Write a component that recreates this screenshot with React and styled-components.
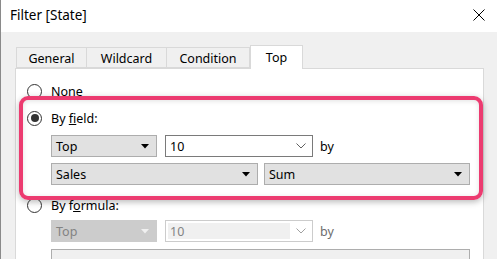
import React from "react";
import styled, { createGlobalStyle } from "styled-components";

const GlobalStyle = createGlobalStyle`
  html, body {
    margin: 0;
    padding: 0;
    background: #f0f0f0;
  }
  body {
    font-family: "Noto Sans", "Open Sans", sans-serif;
    font-size: 12px;
    color: #000;
  }
`;

const tabs = [
  { name: "General", width: "71px" },
  { name: "Wildcard", width: "80px" },
  { name: "Condition", width: "83px" },
  { name: "Top", width: "53px" },
];

const Arrow = () => (
  <svg width="8" height="5" viewBox="0 0 8 5">
    <path d="M0 0 L8 0 L4 4.5 Z" fill="currentColor" />
  </svg>
);

const Chevron = () => (
  <svg width="10" height="6" viewBox="0 0 10 6">
    <path d="M0.5 0.5 L5 5 L9.5 0.5" fill="none" stroke="currentColor" strokeWidth="1" />
  </svg>
);

const CloseIcon = () => (
  <svg width="12" height="12" viewBox="0 0 12 12">
    <path d="M0.5 0.5 L11.5 11.5 M11.5 0.5 L0.5 11.5" stroke="#000" strokeWidth="1" />
  </svg>
);

const Select = ({ value, width, disabled }) => (
  <SelectBox width={width} disabled={disabled}>
    <span>{value}</span>
    <Arrow />
  </SelectBox>
);

const Combo = ({ value, width, disabled }) => (
  <ComboBox width={width} disabled={disabled}>
    <ComboField disabled={disabled}>{value}</ComboField>
    <Chevron />
  </ComboBox>
);

const Radio = ({ checked, children }) => (
  <RadioRow>
    <RadioCircle>{checked && <RadioDot />}</RadioCircle>
    <span>{children}</span>
  </RadioRow>
);

export default function App() {
  return (
    <>
      <GlobalStyle />
      <Window>
        <TitleBar>
          <Title>Filter [State]</Title>
          <CloseButton>
            <CloseIcon />
          </CloseButton>
        </TitleBar>
        <Body>
          <TabRow>
            {tabs.map((t) => (
              <Tab key={t.name} width={t.width} active={t.name === "Top"}>
                {t.name}
              </Tab>
            ))}
          </TabRow>
          <Panel>
            <Radio>None</Radio>
            <Section gap="11px">
              <Radio checked>
                By <u>f</u>ield:
              </Radio>
            </Section>
            <Section gap="9px">
              <Row>
                <Select value="Top" width="106px" />
                <Combo value="10" width="148px" />
                <By>by</By>
              </Row>
            </Section>
            <Section gap="6px">
              <Row narrow>
                <Select value="Sales" width="207px" />
                <Select value="Sum" width="206px" />
              </Row>
            </Section>
            <Section gap="12px">
              <Radio>
                By f<u>o</u>rmula:
              </Radio>
            </Section>
            <Section gap="7px">
              <Row>
                <Select value="Top" width="106px" disabled />
                <Combo value="10" width="148px" disabled />
                <By disabled>by</By>
              </Row>
            </Section>
            <Section gap="7px">
              <Row>
                <FormulaBox />
              </Row>
            </Section>
            <Highlight />
          </Panel>
        </Body>
      </Window>
    </>
  );
}

const Window = styled.div`
  width: 497px;
  height: 259px;
  overflow: hidden;
  border-left: 1px solid #8a8a8a;
  box-sizing: border-box;
  display: flex;
  flex-direction: column;
  background: #f0f0f0;
`;

const TitleBar = styled.div`
  height: 32px;
  flex-shrink: 0;
  background: #fff;
  display: flex;
  align-items: center;
  justify-content: space-between;
  padding: 0 12px 2px 9px;
  box-sizing: border-box;
`;

const Title = styled.div`
  font-size: 13.5px;
`;

const CloseButton = styled.div`
  display: flex;
  align-items: center;
`;

const Body = styled.div`
  flex: 1;
  padding: 13px 13px 0 14px;
  display: flex;
  flex-direction: column;
`;

const TabRow = styled.div`
  display: flex;
  align-items: flex-end;
  height: 23px;
  padding-left: 1px;
  position: relative;
  z-index: 1;
`;

const Tab = styled.div`
  width: ${({ width }) => width};
  height: ${({ active }) => (active ? "24px" : "21px")};
  margin-bottom: ${({ active }) => (active ? "-1px" : "0")};
  padding-top: ${({ active }) => (active ? "0" : "1px")};
  display: flex;
  align-items: center;
  justify-content: center;
  box-sizing: border-box;
  font-size: 12.5px;
  border: 1px solid #d9d9d9;
  border-left-width: ${({ active }) => (active ? "1px" : "0")};
  border-bottom: ${({ active }) => (active ? "none" : "1px solid #d9d9d9")};
  background: ${({ active }) => (active ? "#fff" : "#f0f0f0")};
  &:first-child {
    border-left-width: 1px;
  }
`;

const Panel = styled.div`
  position: relative;
  flex: 1;
  background: #fff;
  border: 1px solid #d9d9d9;
  border-bottom: none;
  padding: 14px 0 0 11px;
  display: flex;
  flex-direction: column;
`;

const Section = styled.div`
  margin-top: ${({ gap }) => gap};
`;

const RadioRow = styled.div`
  display: flex;
  align-items: center;
  gap: 9px;
  height: 16px;
  font-size: 12.5px;
`;

const RadioCircle = styled.div`
  width: 15px;
  height: 15px;
  border-radius: 50%;
  border: 1px solid #333;
  box-sizing: border-box;
  display: flex;
  align-items: center;
  justify-content: center;
  background: #fff;
`;

const RadioDot = styled.div`
  width: 8px;
  height: 8px;
  border-radius: 50%;
  background: #333;
`;

const Row = styled.div`
  display: flex;
  align-items: center;
  gap: ${({ narrow }) => (narrow ? "6px" : "8px")};
  padding-left: 24px;
  font-size: 12.5px;
`;

const SelectBox = styled.div`
  width: ${({ width }) => width};
  height: 22px;
  box-sizing: border-box;
  border: 1px solid ${({ disabled }) => (disabled ? "#cccccc" : "#adadad")};
  background: ${({ disabled }) => (disabled ? "#cccccc" : "#e1e1e1")};
  color: ${({ disabled }) => (disabled ? "#838383" : "#000")};
  display: flex;
  align-items: center;
  justify-content: space-between;
  padding: 0 7px 0 4px;
  svg {
    color: ${({ disabled }) => (disabled ? "#f0f0f0" : "#000")};
  }
`;

const ComboBox = styled.div`
  width: ${({ width }) => width};
  height: 22px;
  box-sizing: border-box;
  border: 1px solid ${({ disabled }) => (disabled ? "#cccccc" : "#7a7a7a")};
  background: #fff;
  display: flex;
  align-items: center;
  padding: 2px 6px 2px 2px;
  gap: 6px;
  svg {
    color: ${({ disabled }) => (disabled ? "#a0a0a0" : "#606060")};
  }
`;

const ComboField = styled.div`
  flex: 1;
  height: 100%;
  display: flex;
  align-items: center;
  padding-left: 2px;
  background: ${({ disabled }) => (disabled ? "#f0f0f0" : "#fff")};
  color: ${({ disabled }) => (disabled ? "#838383" : "#000")};
`;

const By = styled.span`
  margin-left: -1px;
  color: ${({ disabled }) => (disabled ? "#6d6d6d" : "#000")};
`;

const FormulaBox = styled.div`
  width: 419px;
  height: 30px;
  box-sizing: border-box;
  border: 1px solid #adadad;
  background: #f0f0f0;
`;

const Highlight = styled.div`
  position: absolute;
  left: 3px;
  top: 27px;
  width: 464px;
  height: 104px;
  box-sizing: border-box;
  border: 4px solid #ec3b70;
  border-radius: 9px;
  box-shadow: 0 2px 6px rgba(0, 0, 0, 0.28), inset 0 1px 5px rgba(0, 0, 0, 0.12);
  pointer-events: none;
`;
